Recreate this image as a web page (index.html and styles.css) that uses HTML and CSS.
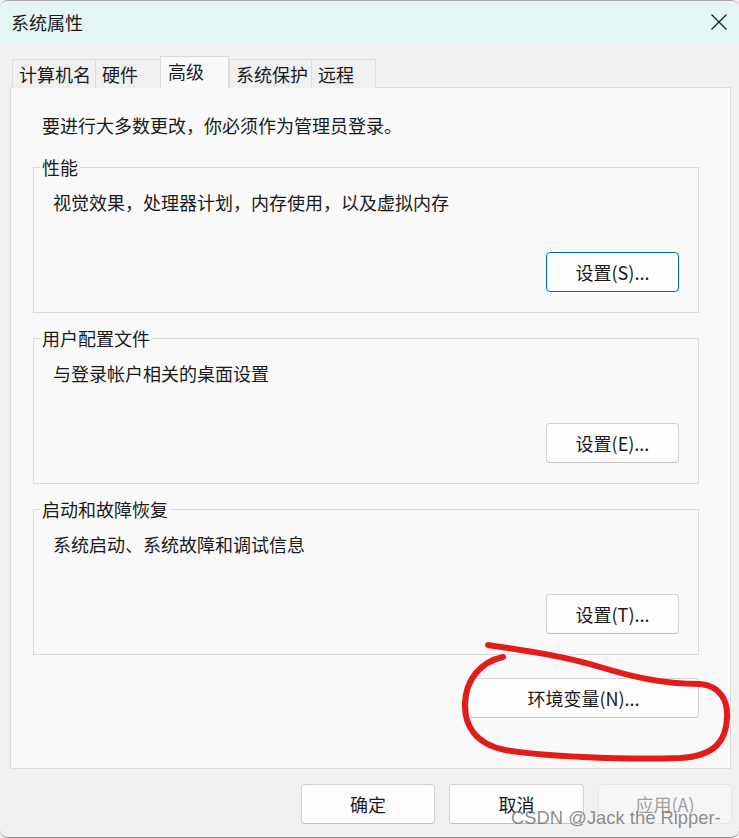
FILE: index.html
```html
<!DOCTYPE html>
<html lang="zh-CN">
<head>
<meta charset="utf-8">
<title>系统属性</title>
<link rel="stylesheet" href="styles.css">
</head>
<body>
<div class="window">
  <div class="titlebar">
    <span class="title">系统属性</span>
    <svg class="close" width="16" height="16" viewBox="0 0 16 16"><path d="M0.5 0.5 L15.5 15.5 M15.5 0.5 L0.5 15.5" stroke="#1a1a1a" stroke-width="1.2" fill="none"/></svg>
  </div>
  <div class="tabs">
    <div class="tab t1">计算机名</div>
    <div class="tab t2">硬件</div>
    <div class="tab sel">高级</div>
    <div class="tab t4">系统保护</div>
    <div class="tab t5">远程</div>
  </div>
  <div class="panel">
    <div class="intro">要进行大多数更改，你必须作为管理员登录。</div>
    <div class="group g1">
      <div class="legend">性能</div>
      <div class="desc">视觉效果，处理器计划，内存使用，以及虚拟内存</div>
      <div class="btn default">设置(S)...</div>
    </div>
    <div class="group">
      <div class="legend">用户配置文件</div>
      <div class="desc">与登录帐户相关的桌面设置</div>
      <div class="btn">设置(E)...</div>
    </div>
    <div class="group">
      <div class="legend">启动和故障恢复</div>
      <div class="desc">系统启动、系统故障和调试信息</div>
      <div class="btn">设置(T)...</div>
    </div>
    <div class="envrow">
      <div class="btn env">环境变量(N)...</div>
    </div>
  </div>
  <div class="footer">
    <div class="btn fbtn">确定</div>
    <div class="btn fbtn w135">取消</div>
    <div class="btn fbtn disabled">应用(A)</div>
  </div>
  <svg class="annot" width="739" height="838" viewBox="0 0 739 838">
    <path d="M488 645 C520 650 560 655 600 667 C630 676 660 684 700 684 C720 686 728 700 727 718 C726 740 716 756 680 758 C620 760 540 756 505 750 C475 744 464 725 465 703 C466 680 480 662 503 657" stroke="#e31b1b" stroke-width="6" fill="none" stroke-linecap="round" stroke-linejoin="round"/>
  </svg>
  <div class="watermark">CSDN @Jack the Ripper-</div>
</div>
</body>
</html>
```

FILE: styles.css
```css
* { box-sizing: border-box; }
html, body { margin: 0; padding: 0; background: #f0f0f0; }
body {
  font-family: "Noto Sans CJK SC", "Microsoft YaHei", sans-serif;
  font-size: 18px;
  color: #1a1a1a;
}
.window {
  position: relative;
  width: 739px;
  height: 838px;
  background: #f0f0f0;
  border-top: 1px solid #a8a8a8;
  border-bottom: 1px solid #8c8c8c;
  border-radius: 8px;
  overflow: hidden;
}
.titlebar {
  height: 42px;
  background: #e3f6f4;
  display: flex;
  align-items: center;
  justify-content: space-between;
  padding: 0 12px 0 11px;
}
.title { line-height: 24px; }
.close { display: block; margin-top: -1px; }
.tabs {
  display: flex;
  align-items: flex-end;
  margin: 13px 0 -1px 12px;
  height: 32px;
  position: relative;
  z-index: 1;
}
.tab {
  height: 29px;
  display: flex;
  align-items: center;
  padding-left: 6px;
  padding-bottom: 1px;
  border-top: 1px solid #dcdcdc;
  border-left: 1px solid #dcdcdc;
  background: #f0f0f0;
  line-height: 24px;
}
.t1 { width: 83px; }
.t2 { width: 65px; }
.t4 { width: 82px; }
.t5 { width: 65px; border-right: 1px solid #dcdcdc; }
.sel {
  width: 69px;
  height: 32px;
  padding-left: 7px;
  padding-bottom: 3px;
  background: #f9f9f9;
  border-right: 1px solid #dcdcdc;
}
.panel {
  margin-left: 10px;
  width: 721px;
  height: 682px;
  border: 1px solid #dcdcdc;
  background: #f9f9f9;
  padding: 25px 0 0 22px;
}
.intro {
  margin-left: 9px;
  line-height: 24px;
}
.group {
  width: 666px;
  border: 1px solid #dcdcdc;
  margin-top: 25px;
  display: flex;
  flex-direction: column;
  padding-bottom: 20px;
}
.g1 { margin-top: 30px; }
.legend {
  align-self: flex-start;
  margin: -13px 0 0 6px;
  padding: 0 2px;
  line-height: 24px;
  background: #f9f9f9;
}
.desc {
  margin: 11px 0 0 19px;
  line-height: 24px;
}
.btn {
  height: 40px;
  line-height: 38px;
  text-align: center;
  background: #fdfdfd;
  border: 1px solid #d3d3d3;
  border-bottom-color: #c2c2c2;
  border-radius: 4px;
  color: #1a1a1a;
}
.group .btn {
  width: 133px;
  margin: 38px 19px 0 auto;
}
.btn.default {
  border: 1px solid #0067c0;
}
.envrow {
  width: 666px;
  display: flex;
  justify-content: flex-end;
  margin-top: 23px;
}
.env { width: 231px; }
.footer {
  display: flex;
  justify-content: flex-end;
  gap: 14px;
  padding-right: 7px;
  margin-top: 15px;
}
.fbtn { width: 134px; }
.w135 { width: 135px; }
.disabled {
  color: #a0a0a0;
  background: #f6f6f6;
  border-color: #e6e6e6;
}
.annot {
  position: absolute;
  left: 0;
  top: -1px;
  pointer-events: none;
}
.watermark {
  position: absolute;
  left: 511px;
  top: 806px;
  font-family: "Liberation Sans", Arial, sans-serif;
  font-size: 18.4px;
  line-height: 22px;
  color: rgba(120, 120, 120, 0.85);
  white-space: nowrap;
}
```
